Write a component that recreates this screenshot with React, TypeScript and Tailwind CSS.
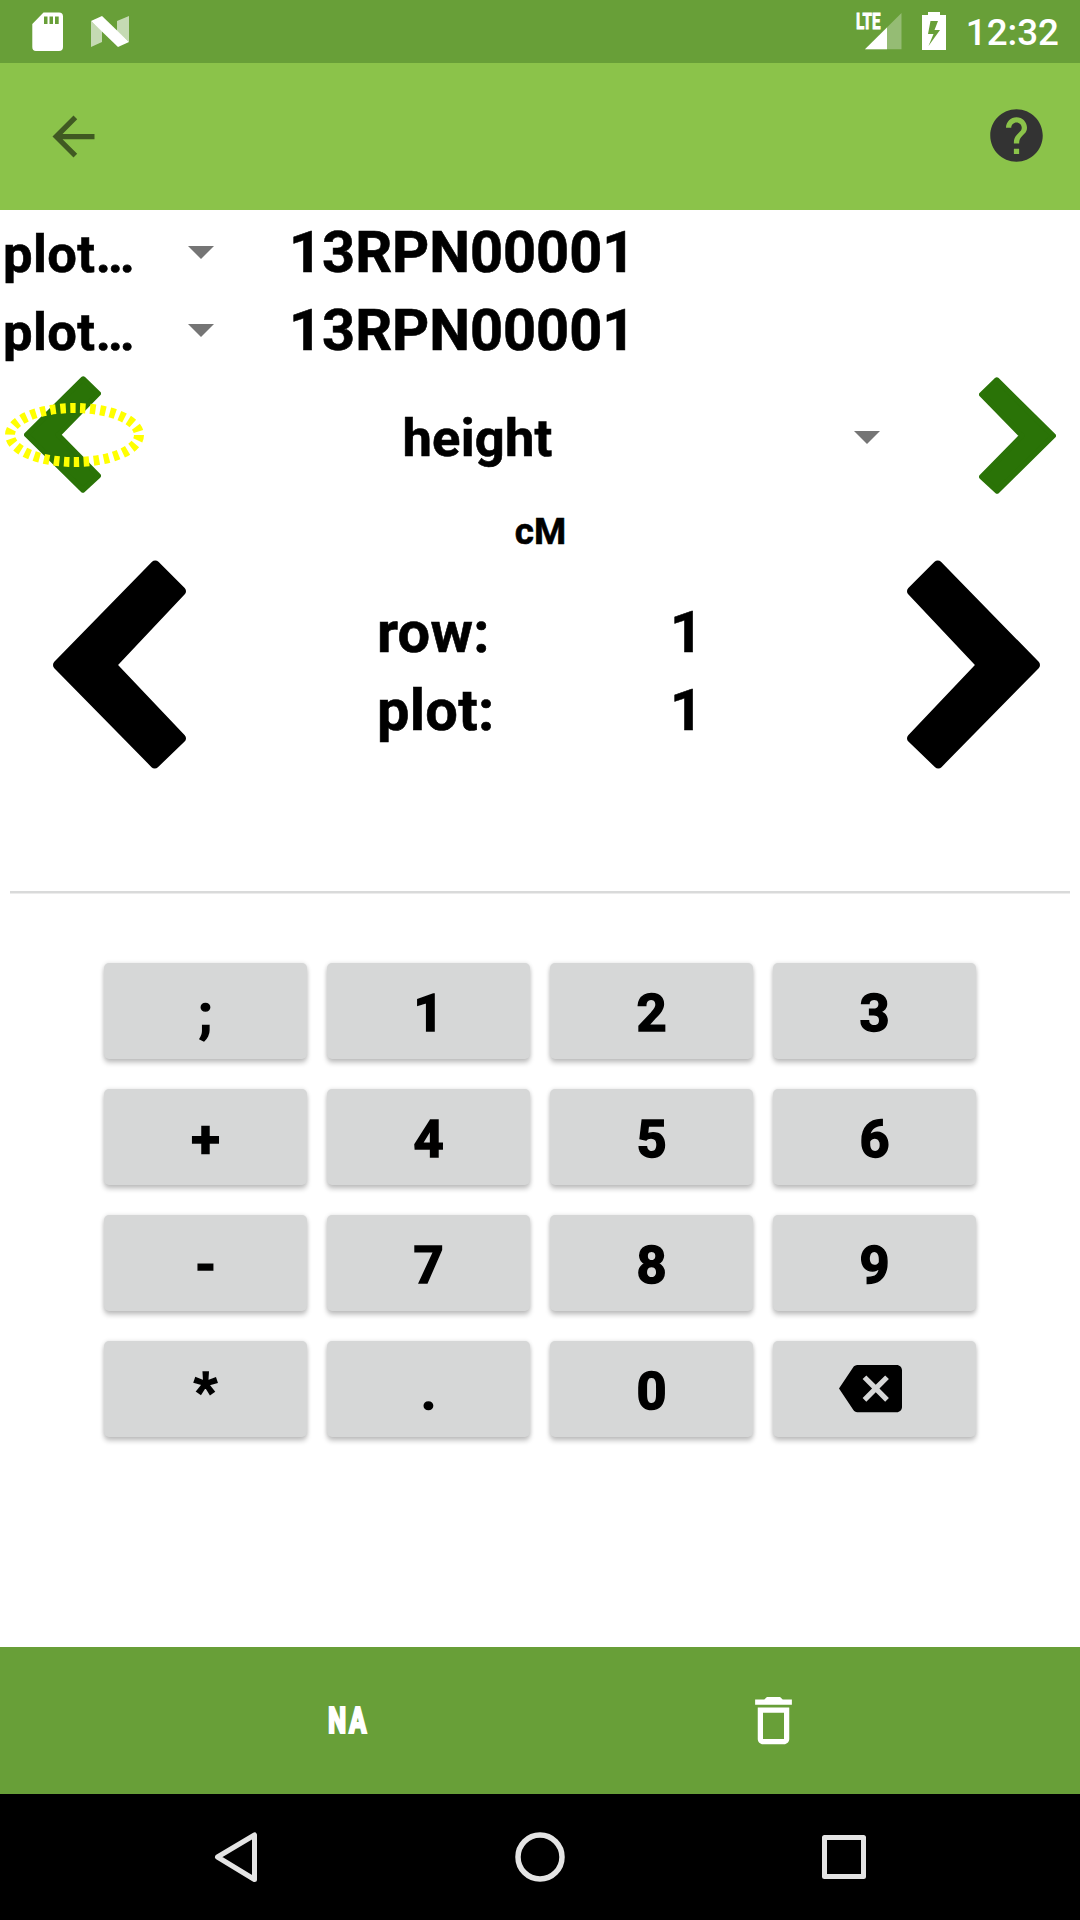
import React from "react";

function Caret({ className = "" }: { className?: string }) {
  return (
    <svg className={"h-[13px] w-[26px] " + className} viewBox="0 0 26 13">
      <path d="M0 0H26L13 13Z" fill="#757575" />
    </svg>
  );
}

function StatusBar() {
  return (
    <header className="flex h-[63px] items-start justify-between bg-[#689f38] text-white">
      <div className="flex pl-8 pt-3">
        <svg className="h-[39px] w-[31px]" viewBox="0 0 31 39">
          <path
            fillRule="evenodd"
            fill="#fff"
            d="M11.5 .5H27Q31 .5 31 4.500V35Q31 39 27 39H4Q.3 39 .3 35V12ZM12 4.500V12H15.500V4.500ZM17.500 4.500V12H21V4.500ZM23 4.500V12H26.700V4.500Z"
          />
        </svg>
        <svg className="ml-[28px] mt-[4px] h-[31px] w-[38px]" viewBox="0 0 38 31">
          <path d="M0 5L11 15V26L0 31ZM38 0V26L26 15V5Z" fill="#fff" fillOpacity=".62" />
          <path d="M0 5L11 0L38 26L27 31Z" fill="#fff" />
        </svg>
      </div>
      <div className="flex pr-[21px]">
        <svg className="mt-2 h-[42px] w-[50px]" viewBox="-4 -4 50 42">
          <path d="M45.500 1V37.300H9Z" fill="#fff" fillOpacity=".3" />
          <path d="M31 15.500V37.300H9Z" fill="#fff" />
          <text x="0" y="17" fill="#fff" stroke="#fff" strokeWidth=".9" fontFamily="Roboto" fontWeight="700" fontSize="22.5" textLength="24.5" lengthAdjust="spacingAndGlyphs">
            LTE
          </text>
        </svg>
        <svg className="ml-[20px] mt-3 h-[38px] w-6" viewBox="0 0 24 38">
          <path fillRule="evenodd" fill="#fff" d="M6 0H18V3H24V38H0V3H6ZM8.500 9L6 22H11.500L6.500 34L18 18H12.500L16 9Z" />
        </svg>
        <span className="ml-[20px] mt-[11px] text-[36.75px] font-medium leading-[44px]">12:32</span>
      </div>
    </header>
  );
}

function AppBar() {
  return (
    <div className="flex h-[147px] items-center justify-between bg-[#8bc34a] pl-[42px] pr-8">
      <svg className="h-[63px] w-[63px]" viewBox="0 0 24 24" fill="#000" fillOpacity=".54">
        <path d="M20 11H7.830l5.590-5.590L12 4l-8 8 8 8 1.410-1.410L7.830 13H20z" />
      </svg>
      <svg className="mb-[2px] h-[63px] w-[63px]" viewBox="0 0 24 24" fill="#333">
        <path d="M12 2C6.480 2 2 6.480 2 12s4.480 10 10 10 10-4.480 10-10S17.520 2 12 2zm1 17h-2v-2h2zm2.070-7.750l-.9.920C13.450 12.900 13 13.500 13 15h-2v-.5c0-1.100.45-2.100 1.170-2.830l1.240-1.260c.37-.36.590-.86.590-1.410 0-1.100-.9-2-2-2s-2 .9-2 2H8c0-2.210 1.790-4 4-4s4 1.790 4 4c0 .88-.36 1.680-.93 2.250z" />
      </svg>
    </div>
  );
}

function InfoRow() {
  return (
    <div className="flex h-[78px] items-center">
      <div className="flex w-[289px] items-center">
        <span className="w-[185px] pl-[3px] pt-[3px] text-[52.5px] leading-[62px] tracking-[0.4px]">plot…</span>
        <Caret className="ml-[2.5px]" />
      </div>
      <span className="text-[57.75px] leading-[68px] tracking-[-0.06px]">13RPN00001</span>
    </div>
  );
}

function Chevron({ className = "", color }: { className?: string; color: string }) {
  return (
    <svg className={className} viewBox="0 0 132 208" preserveAspectRatio="none">
      <path
        d="M101.500 5L127.500 31L58.500 104.500L127.500 177.500L101 203L4.500 104.500Z"
        fill={color}
        stroke={color}
        strokeWidth="9"
        strokeLinejoin="round"
      />
    </svg>
  );
}

function TraitRow() {
  return (
    <div className="flex h-[134px] items-start">
      <div className="relative h-[134px] w-[150px]">
        <Chevron color="#2a7307" className="ml-6 mt-[7px] h-[117px] w-[77px]" />
        <svg className="absolute left-[5px] top-[33px] h-[66px] w-[140px]" viewBox="0 0 140 66">
          <ellipse cx="69.500" cy="33" rx="64.500" ry="27" fill="none" stroke="#ff0" strokeWidth="10" strokeDasharray="5.5 4.5" />
        </svg>
      </div>
      <div className="flex flex-1 items-center pt-[37px]">
        <span className="w-[655px] pt-px text-center text-[52.5px] leading-[62px] tracking-[0.2px]">height</span>
        <Caret className="ml-[48.5px] -mt-px" />
      </div>
      <Chevron color="#2a7307" className="mr-6 mt-[8px] h-[117px] w-[77px] -scale-x-100" />
    </div>
  );
}

function RangeRow() {
  return (
    <div className="flex h-[210px] items-start">
      <Chevron color="#000" className="ml-[53px] h-[209px] w-[133px]" />
      <div className="grid flex-1 grid-cols-[293px_1fr] pl-[191px] pt-[33px] text-[57.75px] leading-[78px] tracking-[0.3px]">
        <span>row:</span>
        <span>1</span>
        <span>plot:</span>
        <span>1</span>
      </div>
      <Chevron color="#000" className="mr-[40px] h-[209px] w-[133px] -scale-x-100" />
    </div>
  );
}

const keys = [";", "1", "2", "3", "+", "4", "5", "6", "-", "7", "8", "9", "*", ".", "0", "del"];

function Keypad() {
  return (
    <div className="mx-[104px] mt-[69px] grid grid-cols-4 gap-x-5 gap-y-[30px]">
      {keys.map((k) => (
        <button
          key={k}
          className="flex h-24 items-center justify-center rounded-[5px] bg-[#d6d7d7] pt-[4px] text-[52.5px] font-bold leading-[62px] shadow-[0_4px_5px_rgba(0,0,0,0.22),0_0_4px_rgba(0,0,0,0.12)] [-webkit-text-stroke:1.5px_black]"
        >
          {k === "del" ? (
            <svg className="-ml-[8px] -mt-[6px] h-[63px] w-[63px]" viewBox="0 0 24 24">
              <path d="M22 3H7c-.69 0-1.230.35-1.590.88L0 12l5.410 8.110c.36.530.9.890 1.590.890h15c1.100 0 2-.9 2-2V5c0-1.100-.9-2-2-2zm-3 12.590L17.590 17 14 13.410 10.410 17 9 15.590 12.590 12 9 8.410 10.410 7 14 10.590 17.590 7 19 8.410 15.410 12z" />
            </svg>
          ) : (
            k
          )}
        </button>
      ))}
    </div>
  );
}

function ActionBar() {
  return (
    <div className="flex h-[147px] items-center bg-[#689f38] text-white">
      <div className="ml-[328px] flex h-[44px] w-[44px] items-center">
        <span className="origin-left scale-x-[0.7] text-[37px] font-extrabold leading-[44px] tracking-[3.5px] [-webkit-text-stroke:2px_white]">
          NA
        </span>
      </div>
      <svg className="ml-[370px] h-[63px] w-[63px]" viewBox="0 0 24 24" fill="#fff">
        <path d="M6 19c0 1.100.9 2 2 2h8c1.100 0 2-.9 2-2V7H6zM8 9h8v10H8zM15.500 4l-1-1h-5l-1 1H5v2h14V4z" />
      </svg>
    </div>
  );
}

function NavBar() {
  return (
    <nav className="flex h-[126px] items-center justify-between bg-black px-[204px]">
      <svg className="h-[64px] w-[64px]" viewBox="0 0 64 64" fill="none" stroke="#e4e4e4" strokeWidth="5" strokeLinejoin="round">
        <path d="M50.500 10V54.500L13.500 32Z" />
      </svg>
      <svg className="h-[64px] w-[64px]" viewBox="0 0 64 64" fill="none" stroke="#e4e4e4" strokeWidth="5.500">
        <circle cx="32" cy="32" r="22" />
      </svg>
      <svg className="h-[64px] w-[64px]" viewBox="0 0 64 64" fill="none" stroke="#e4e4e4" strokeWidth="5" strokeLinejoin="round">
        <path d="M12.500 12.500H51.500V51.500H12.500Z" />
      </svg>
    </nav>
  );
}

export default function App() {
  return (
    <div className="flex h-[1920px] w-[1080px] flex-col overflow-hidden bg-white font-[Roboto,sans-serif] text-black">
      <StatusBar />
      <AppBar />
      <main className="flex-1 pt-[3px] font-bold [-webkit-text-stroke:0.6px_black]">
        <InfoRow />
        <InfoRow />
        <TraitRow />
        <div className="h-[57px] pl-px pt-[7px] text-center text-[36.75px] leading-[44px]">cM</div>
        <RangeRow />
        <div className="mx-[10px] mt-[121px] h-[3px] border-b border-[#ececec] bg-[#d9dada]" />
        <Keypad />
      </main>
      <ActionBar />
      <NavBar />
    </div>
  );
}
